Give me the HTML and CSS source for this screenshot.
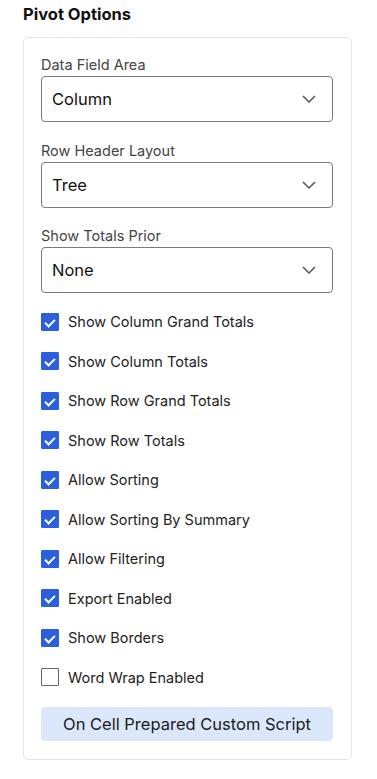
FILE: index.html
```html
<!DOCTYPE html>
<html lang="en">
<head>
  <meta charset="UTF-8" />
  <title>Pivot Options</title>
  <meta name="viewport" content="width=device-width, initial-scale=1.0"/>
  <link rel="stylesheet" href="styles.css">
</head>
<body>
  <div class="painel">
    <h2 class="titulo">Pivot Options</h2>
    <div class="cartao">
      <div class="campo">
        <label>Data Field Area</label>
        <div class="seletor"><span>Column</span>
          <svg width="14" height="8" viewBox="0 0 14 8"><path d="M1 1l6 6 6-6" fill="none" stroke="#555" stroke-width="1.5"/></svg>
        </div>
      </div>
      <div class="campo">
        <label>Row Header Layout</label>
        <div class="seletor"><span>Tree</span>
          <svg width="14" height="8" viewBox="0 0 14 8"><path d="M1 1l6 6 6-6" fill="none" stroke="#555" stroke-width="1.5"/></svg>
        </div>
      </div>
      <div class="campo">
        <label>Show Totals Prior</label>
        <div class="seletor"><span>None</span>
          <svg width="14" height="8" viewBox="0 0 14 8"><path d="M1 1l6 6 6-6" fill="none" stroke="#555" stroke-width="1.5"/></svg>
        </div>
      </div>
      <ul class="opcoes">
        <li><span class="caixa marcada"></span>Show Column Grand Totals</li>
        <li><span class="caixa marcada"></span>Show Column Totals</li>
        <li><span class="caixa marcada"></span>Show Row Grand Totals</li>
        <li><span class="caixa marcada"></span>Show Row Totals</li>
        <li><span class="caixa marcada"></span>Allow Sorting</li>
        <li><span class="caixa marcada"></span>Allow Sorting By Summary</li>
        <li><span class="caixa marcada"></span>Allow Filtering</li>
        <li><span class="caixa marcada"></span>Export Enabled</li>
        <li><span class="caixa marcada"></span>Show Borders</li>
        <li><span class="caixa"></span>Word Wrap Enabled</li>
      </ul>
      <button class="botao">On Cell Prepared Custom Script</button>
    </div>
  </div>
</body>
</html>
```

FILE: styles.css
```css
* {
  box-sizing: border-box;
}
body {
  font-family: Inter, "Noto Sans", sans-serif;
  margin: 0;
  padding: 0;
  background: #fff;
  color: #222;
}
.painel {
  padding: 4px 25px 0 23px;
  width: 377px;
}
.titulo {
  font-size: 16.5px;
  font-weight: 700;
  margin: 0 0 13px;
  line-height: 20px;
  color: #111;
}
.cartao {
  border: 1px solid #e4e4e4;
  border-radius: 5px;
  padding: 17px 18px 18px 17px;
}
.campo {
  margin-bottom: 18.5px;
}
.campo:last-of-type {
  margin-bottom: 9px;
}
.campo label {
  display: block;
  font-size: 14.5px;
  line-height: 20px;
  color: #444;
  margin-bottom: 1px;
}
.seletor {
  display: flex;
  align-items: center;
  justify-content: space-between;
  height: 46px;
  border: 1px solid #7a7a7a;
  border-radius: 4px;
  padding: 0 16px 0 10px;
  font-size: 16.5px;
  color: #111;
}
.opcoes {
  list-style: none;
  margin: 0;
  padding: 0;
}
.opcoes li {
  display: flex;
  align-items: center;
  height: 39.5px;
  font-size: 14.5px;
  color: #222;
}
.caixa {
  width: 18px;
  height: 18px;
  margin-right: 9px;
  border: 1px solid #666;
  border-radius: 1px;
  flex-shrink: 0;
  position: relative;
}
.caixa.marcada {
  background: #2b5fde;
  border-color: #2b5fde;
}
.caixa.marcada::after {
  content: "";
  position: absolute;
  left: 5px;
  top: 3px;
  width: 4px;
  height: 8px;
  border: solid #fff;
  border-width: 0 2px 2px 0;
  transform: rotate(45deg);
}
.botao {
  display: block;
  width: 100%;
  height: 34px;
  margin-top: 10px;
  border: none;
  border-radius: 4px;
  background: #dbe8fc;
  font-family: inherit;
  font-size: 16.5px;
  color: #1a1a1a;
  cursor: pointer;
}
```
